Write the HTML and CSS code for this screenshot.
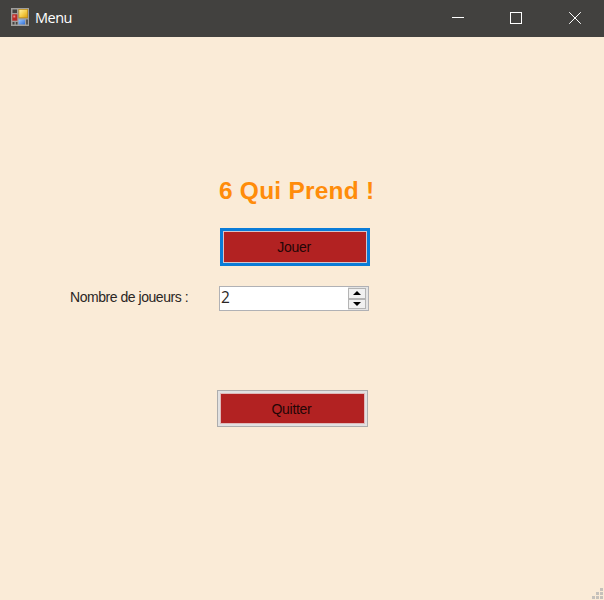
FILE: index.html
```html
<!DOCTYPE html>
<html lang="fr">
<head>
<meta charset="utf-8">
<title>Menu</title>
<link rel="stylesheet" href="styles.css">
</head>
<body>
<div class="window">
  <header class="titlebar">
    <svg class="app-icon" width="18" height="18" viewBox="0 0 18 18">
      <defs>
        <linearGradient id="gold" x1="0" y1="0" x2="1" y2="1"><stop offset="0" stop-color="#fff0a0"/><stop offset=".5" stop-color="#f6cf4c"/><stop offset="1" stop-color="#dda010"/></linearGradient>
        <linearGradient id="blue" x1="0" y1="0" x2="1" y2="1"><stop offset="0" stop-color="#9cc8ff"/><stop offset="1" stop-color="#2f6fd8"/></linearGradient>
      </defs>
      <rect width="18" height="18" fill="#a09f9d"/>
      <rect x="1.5" y="1.5" width="4.5" height="3.5" fill="#444341"/>
      <rect x="1.3" y="6.3" width="5" height="6.4" fill="#b92a26"/>
      <rect x="2.3" y="7.5" width="2" height="2" fill="#ee8580"/>
      <rect x="1.5" y="14" width="2" height="2.5" fill="#444341"/>
      <rect x="4.8" y="14" width="1.7" height="2.5" fill="#444341"/>
      <rect x="7.5" y="1" width="9.5" height="9.2" fill="#b88a20"/>
      <rect x="8.3" y="1.8" width="7.9" height="7.6" fill="url(#gold)"/>
      <rect x="7.6" y="11.6" width="6.4" height="4.8" fill="url(#blue)"/>
      <rect x="15" y="11.5" width="2" height="5" fill="#555452"/>
    </svg>
    <span class="caption">Menu</span>
    <div class="controls">
      <svg width="58" height="37" viewBox="0 0 58 37"><path d="M22 17.5h12"/></svg>
      <svg width="58" height="37" viewBox="0 0 58 37"><rect x="22.5" y="12.5" width="11" height="11"/></svg>
      <svg width="58" height="37" viewBox="0 0 58 37"><path d="M23.2 12.2l11.6 11.6M34.8 12.2L23.2 23.8"/></svg>
    </div>
  </header>
  <main class="form">
    <h1 class="title">6 Qui Prend !</h1>
    <button class="btn btn-play">Jouer</button>
    <div class="players">
      <label class="label">Nombre de joueurs :</label>
      <div class="spinner">
        <span class="value">2</span>
        <div class="arrows">
          <span class="arrow"><svg width="8" height="4" viewBox="0 0 8 4"><path d="M4 0L8 4H0z"/></svg></span>
          <span class="arrow"><svg width="8" height="4" viewBox="0 0 8 4"><path d="M0 0h8L4 4z"/></svg></span>
        </div>
      </div>
    </div>
    <button class="btn btn-quit">Quitter</button>
    <svg class="grip" width="12" height="12" viewBox="0 0 12 12">
      <path d="M8 0h3v3h-3zM4 4h3v3h-3zM8 4h3v3h-3zM0 8h3v3h-3zM4 8h3v3h-3zM8 8h3v3h-3z"/>
    </svg>
  </main>
</div>
</body>
</html>
```
FILE: styles.css
```css
* {
  box-sizing: border-box;
}

body {
  margin: 0;
  font-family: "Liberation Sans", Arial, sans-serif;
  font-size: 14px;
  color: #2a2624;
}

.window {
  display: flex;
  flex-direction: column;
  width: 604px;
  height: 600px;
  overflow: hidden;
}

.titlebar {
  display: flex;
  align-items: center;
  height: 37px;
  padding-left: 11px;
  background: #42413f;
  color: #fff;
}

.app-icon {
  margin-top: -3px;
}

.caption {
  margin: -3px 0 0 6px;
  font: 14.5px "Open Sans", sans-serif;
  letter-spacing: -0.5px;
}

.controls {
  display: flex;
  margin-left: auto;
  fill: none;
  stroke: #fff;
  stroke-width: 1;
}

.form {
  display: flex;
  flex: 1;
  flex-direction: column;
  align-items: flex-start;
  background: #faebd7;
}

.title {
  margin: 139px 0 0 219px;
  font-size: 24.5px;
  line-height: 30px;
  font-weight: bold;
  letter-spacing: 0.22px;
  color: #ff8c0a;
  white-space: nowrap;
}

.btn {
  width: 150px;
  height: 37px;
  padding: 0 2px 0 0;
  background: #b22222;
  background-clip: padding-box;
  font: 14px "Liberation Sans", Arial, sans-serif;
  letter-spacing: -0.3px;
  color: #240606;
}

.btn-play {
  height: 38px;
  margin: 22px 0 0 220px;
  border: 3px solid #0a7cd8;
  box-shadow: inset 0 0 0 1px #d5c4cb;
}

.btn-quit {
  width: 151px;
  margin: 79px 0 0 217px;
  border: 1px solid #adadad;
  box-shadow: inset 0 0 0 2px #e1e1e1, inset 0 0 0 3px #dfb9b9;
}

.players {
  display: flex;
  margin: 20px 0 0 70px;
}

.label {
  width: 149px;
  line-height: 23px;
  letter-spacing: -0.46px;
  white-space: nowrap;
}

.spinner {
  display: flex;
  width: 150px;
  height: 25px;
  border: 1px solid #b0b1b5;
  background: #fff;
}

.value {
  flex: 1;
  padding-left: 1px;
  font: 15.5px/20px "Open Sans", sans-serif;
}

.arrows {
  display: flex;
  flex-direction: column;
  width: 20px;
  padding: 1px 2px 1px 0;
  background: #e4e4e4;
}

.arrow {
  display: flex;
  flex: 1;
  align-items: center;
  justify-content: center;
  border: 1px solid #b4b4b4;
  background: #f0f0f0;
}

.grip {
  align-self: flex-end;
  margin-top: auto;
  fill: #c5c1bb;
}
```
